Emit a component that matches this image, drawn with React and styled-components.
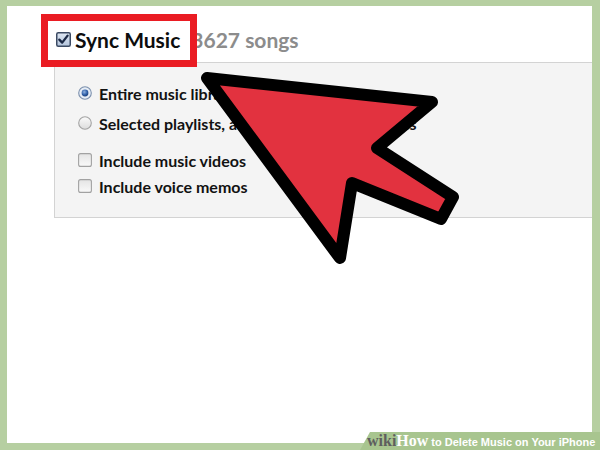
import React from "react";
import styled, { createGlobalStyle } from "styled-components";

const GlobalStyle = createGlobalStyle`
  html, body { margin: 0; padding: 0; width: 600px; height: 450px; overflow: hidden; background: #b6cfa1; }
  #root { width: 600px; height: 450px; }
`;

const Frame = styled.div`
  position: relative;
  width: 600px;
  height: 450px;
  box-sizing: border-box;
  padding: 6px 8px 7px 7px;
  background: #b6cfa1;
  display: flex;
`;

const Canvas = styled.div`
  position: relative;
  flex: 1;
  background: #ffffff;
  overflow: hidden;
  display: flex;
  flex-direction: column;
  font-family: Lato, "Open Sans", sans-serif;
  color: #111;
`;

const Header = styled.div`
  display: flex;
  align-items: center;
  height: 30px;
  margin: 18px 0 0 49px;
  white-space: nowrap;
`;

const Title = styled.span`
  font-size: 21px;
  font-weight: 700;
  margin-left: 4px;
  color: #0d0d0d;
`;

const Count = styled.span`
  font-size: 21px;
  font-weight: 700;
  color: #8c8c8c;
  margin-left: 11px;
`;

const Highlight = styled.div`
  position: absolute;
  left: 34px;
  top: 8px;
  width: 156px;
  height: 53px;
  box-sizing: border-box;
  border: 7px solid #ea1c23;
`;

const Panel = styled.div`
  margin: 8px 0 0 47px;
  height: 156px;
  box-sizing: border-box;
  border: 1px solid #d3d3d3;
  border-right: none;
  background: #f4f4f4;
  padding: 17px 0 0 23px;
  display: flex;
  flex-direction: column;
  gap: 11px;
`;

const Group = styled.div`
  display: flex;
  flex-direction: column;
  gap: ${(p) => p.$gap}px;
`;

const Option = styled.div`
  display: flex;
  align-items: center;
  gap: 7px;
  height: 26px;
  font-size: 16px;
  font-weight: 700;
  white-space: nowrap;
  color: #121212;
`;

const ArrowSvg = styled.svg`
  position: absolute;
  left: 180px;
  top: 55px;
  pointer-events: none;
`;

const Banner = styled.div`
  position: absolute;
  right: 0;
  bottom: 0;
  width: 240px;
  height: 18px;
  box-sizing: border-box;
  padding-left: 7px;
  background: #a8c58f;
  clip-path: polygon(10px 0, 100% 0, 100% 100%, 0 100%);
  display: flex;
  align-items: baseline;
  line-height: 18px;
  white-space: nowrap;
`;

const Wiki = styled.span`
  font-family: "Liberation Serif", serif;
  font-weight: 700;
  font-size: 16px;
  color: ${(p) => p.$color};
`;

const BannerText = styled.span`
  font-family: "Liberation Sans", Arial, sans-serif;
  font-weight: 700;
  font-size: 11px;
  color: #ffffff;
  margin-left: 3px;
`;

const CheckedBox = () => (
  <svg width="15" height="15" viewBox="0 0 15 15">
    <defs>
      <linearGradient id="cb" x1="0" y1="0" x2="0" y2="1">
        <stop offset="0" stopColor="#dfe7f2" />
        <stop offset="1" stopColor="#b3c4dc" />
      </linearGradient>
    </defs>
    <rect x="0.75" y="0.75" width="13.5" height="13.5" rx="1.5" fill="url(#cb)" stroke="#3b4a63" strokeWidth="1.5" />
    <path d="M3.3 7.6 L6.2 10.6 L11.6 3.6" fill="none" stroke="#1b2945" strokeWidth="2.3" strokeLinecap="round" strokeLinejoin="round" />
  </svg>
);

const Radio = ({ on }) => (
  <svg width="14" height="14" viewBox="0 0 14 14">
    <defs>
      <linearGradient id="rg" x1="0" y1="0" x2="0" y2="1">
        <stop offset="0" stopColor="#fbfbfb" />
        <stop offset="1" stopColor="#dcdcdc" />
      </linearGradient>
      <radialGradient id="rd" cx="0.4" cy="0.35" r="0.7">
        <stop offset="0" stopColor="#8fb2e0" />
        <stop offset="0.6" stopColor="#2f5fa8" />
        <stop offset="1" stopColor="#1c3d74" />
      </radialGradient>
    </defs>
    <circle cx="7" cy="7" r="6.3" fill={on ? "#e6edf6" : "url(#rg)"} stroke={on ? "#7c90ad" : "#a3a3a3"} strokeWidth="1.1" />
    {on && <circle cx="7" cy="7" r="3.4" fill="url(#rd)" />}
  </svg>
);

const Box = () => (
  <svg width="14" height="14" viewBox="0 0 14 14">
    <defs>
      <linearGradient id="bx" x1="0" y1="0" x2="0" y2="1">
        <stop offset="0" stopColor="#e4e4e4" />
        <stop offset="1" stopColor="#fafafa" />
      </linearGradient>
    </defs>
    <rect x="0.6" y="0.6" width="12.8" height="12.8" rx="2" fill="url(#bx)" stroke="#a2a2a2" strokeWidth="1.1" />
  </svg>
);

export default function App() {
  return (
    <>
      <GlobalStyle />
      <Frame>
        <Canvas>
          <Header>
            <CheckedBox />
            <Title>Sync Music</Title>
            <Count>3627 songs</Count>
          </Header>
          <Highlight />
          <Panel>
            <Group $gap={4}>
              <Option>
                <Radio on />
                Entire music library
              </Option>
              <Option>
                <Radio />
                Selected playlists, artists, albums, and genres
              </Option>
            </Group>
            <Group $gap={0}>
              <Option>
                <Box />
                Include music videos
              </Option>
              <Option>
                <Box />
                Include voice memos
              </Option>
            </Group>
          </Panel>
        </Canvas>
        <ArrowSvg width="300" height="225" viewBox="180 55 300 225">
          <polygon
            points="207,78 432,102 377,148 453,197 441,219 352,183 340,258"
            fill="#e2323f"
            stroke="#000"
            strokeWidth="12"
            strokeLinejoin="round"
          />
        </ArrowSvg>
        <Banner>
          <Wiki $color="#5e5e5e">wiki</Wiki>
          <Wiki $color="#ffffff">How</Wiki>
          <BannerText>to Delete Music on Your iPhone</BannerText>
        </Banner>
      </Frame>
    </>
  );
}
